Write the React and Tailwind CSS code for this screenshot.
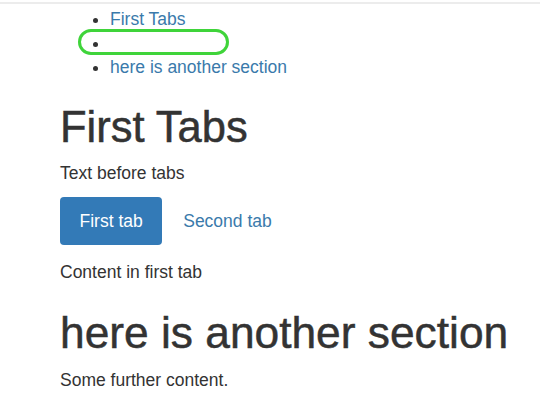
export default function App() {
  return (
    <div className="min-h-[402px] bg-white text-[#333] font-['Liberation_Sans',Arial,sans-serif] text-[17.5px] leading-[24px]">
      <div className="h-[5px] border-t-[2px] border-[#ececec] mt-[2px]" />
      <div className="pl-[60px]">
        <ul className="list-disc pl-[50px]">
          <li>
            <a className="text-[#3a7aab]">First Tabs</a>
          </li>
          <li className="relative">
            <span className="absolute left-[-32px] top-[-2px] w-[151px] h-[26px] rounded-full border-[3px] border-[#3fd43a]" />
            &nbsp;
          </li>
          <li>
            <a className="text-[#3a7aab]">here is another section</a>
          </li>
        </ul>

        <h1 className="mt-[26px] text-[43.5px] leading-[44px] [-webkit-text-stroke:0.5px_#333]">First Tabs</h1>
        <p className="mt-[12px]">Text before tabs</p>

        <div className="mt-[12px] flex items-center gap-[2px]">
          <button className="h-[48px] px-[19.5px] rounded-[4px] bg-[#337ab7] text-white">First tab</button>
          <button className="h-[48px] px-[19px] text-[#3a7aab]">Second tab</button>
        </div>

        <p className="mt-[15px]">Content in first tab</p>

        <h2 className="mt-[27px] text-[44.3px] leading-[44px] [-webkit-text-stroke:0.5px_#333]">here is another section</h2>
        <p className="mt-[13px]">Some further content.</p>
      </div>
    </div>
  );
}
